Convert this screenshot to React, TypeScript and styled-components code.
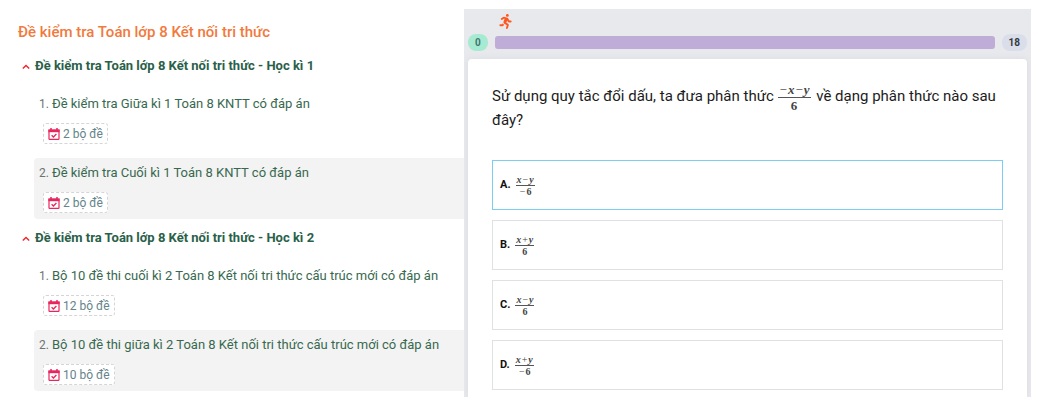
import React from "react";
import styled, { createGlobalStyle } from "styled-components";
import { FaRunning } from "react-icons/fa";

const GlobalStyle = createGlobalStyle`
  * { box-sizing: border-box; }
  body {
    margin: 0;
    background: #fff;
    font-family: Roboto, "Liberation Sans", sans-serif;
    color: #1c1c1c;
  }
`;

const Page = styled.div`
  display: grid;
  grid-template-columns: minmax(0, 464fr) minmax(0, 567fr);
  padding: 9px 8px 10px 0;
`;

const Sidebar = styled.aside`
  padding: 13px 0 6px 18px;
`;

const Title = styled.h1`
  margin: 0 0 14px;
  font-size: 15px;
  line-height: 20px;
  font-weight: 500;
  color: #f17a3c;
`;

const Group = styled.section`
  & + & { margin-top: 9px; }
`;

const GroupToggle = styled.button`
  display: flex;
  align-items: center;
  gap: 5px;
  width: 100%;
  margin: 0 0 13px;
  padding: 0 0 0 4px;
  border: 0;
  background: none;
  font: 700 13px/20px Roboto, "Liberation Sans", sans-serif;
  color: #2a6049;
  text-align: left;
  cursor: pointer;
`;

const ExamList = styled.ol`
  display: flex;
  flex-direction: column;
  gap: 8px;
  margin: 0;
  padding: 0 0 0 16px;
  list-style: none;
`;

const Exam = styled.li<{ $shaded: boolean }>`
  display: flex;
  flex-direction: column;
  align-items: flex-start;
  gap: 9px;
  padding: 5px 5px 6px;
  border-radius: 4px 0 0 4px;
  background: ${(p) => (p.$shaded ? "#f3f3f3" : "transparent")};
`;

const ExamLine = styled.div`
  display: flex;
  align-items: baseline;
  gap: 3px;
  height: 20px;
  line-height: 20px;
  white-space: nowrap;
`;

const Order = styled.span`
  font-size: 12px;
  color: #6d7470;
`;

const ExamLink = styled.a`
  font-size: 13px;
  color: #38694f;
  text-decoration: none;
`;

const CountBadge = styled.span`
  display: flex;
  align-items: center;
  gap: 3px;
  height: 21px;
  margin-left: 4px;
  padding: 0 4px;
  border: 1px dashed #d3d5d6;
  border-radius: 3px;
  background: #fff;
  font-size: 12px;
  color: #64838a;
`;

const Quiz = styled.main`
  display: flex;
  flex-direction: column;
  padding: 5px 4px 0;
  background: #e8e9ed;
`;

const Runner = styled.div`
  height: 18px;
  padding-left: 30px;
  color: #ff5722;

  svg { display: block; }
`;

const ProgressRow = styled.div`
  display: flex;
  align-items: center;
  gap: 7px;
  height: 20px;
  margin-bottom: 7px;
`;

const Pill = styled.span<{ $active?: boolean }>`
  padding: 0 7px;
  border-radius: 8px;
  background: ${(p) => (p.$active ? "#a7ead2" : "#d9deea")};
  color: ${(p) => (p.$active ? "#41776f" : "#353a42")};
  font-size: 10px;
  line-height: 17px;
  font-weight: 700;
`;

const Track = styled.div`
  flex: 1;
  height: 13px;
  border-radius: 3px;
  background: #bfadd7;
`;

const Card = styled.section`
  flex: 1;
  padding: 25px 24px 7px;
  border-radius: 4px 4px 0 0;
  background: #fff;
  box-shadow: 0 0 6px #d9dade;
  clip-path: inset(-6px -4px 0);
`;

const Question = styled.p`
  margin: 0 0 28px;
  font-size: 15px;
  line-height: 24px;
`;

const Options = styled.div`
  display: flex;
  flex-direction: column;
  gap: 10px;
`;

const Option = styled.button<{ $selected: boolean }>`
  display: flex;
  align-items: center;
  gap: 5px;
  height: 50px;
  padding: 0 7px;
  border: 1px solid ${(p) => (p.$selected ? "#7bcdf3" : "#e0e1e3")};
  background: #fff;
  font: 700 11px/16px Roboto, "Liberation Sans", sans-serif;
  color: #111;
  cursor: pointer;
`;

const FractionBox = styled.span<{ $large?: boolean }>`
  display: inline-flex;
  flex-direction: column;
  vertical-align: middle;
  margin: ${(p) => (p.$large ? "-8px 2px -8px 0" : "0")};
  font-family: "Liberation Serif", serif;
  font-size: ${(p) => (p.$large ? "13px" : "10px")};
  line-height: ${(p) => (p.$large ? "15px" : "11px")};
  font-weight: 700;
  text-align: center;
  color: #444;
`;

const Numerator = styled.span`
  padding: 0 1px;
  border-bottom: 1px solid #555;
`;

const Operator = styled.span`
  padding: 0 1px;
  font-weight: 400;
`;

const Fraction = ({ top, bottom, large }: { top: string; bottom: string; large?: boolean }) => {
  const typeset = (text: string) =>
    text.split("").map((ch, i) => {
      if (/[a-z]/.test(ch)) return <i key={i}>{ch}</i>;
      if (/[−+]/.test(ch)) return <Operator key={i}>{ch}</Operator>;
      return ch;
    });
  return (
    <FractionBox $large={large}>
      <Numerator>{typeset(top)}</Numerator>
      <span>{typeset(bottom)}</span>
    </FractionBox>
  );
};

const CalendarCheck = () => (
  <svg width="12" height="12" viewBox="0 0 12 12" fill="none" stroke="#e8265e" aria-hidden="true">
    <path d="M1 2.2h10v8.6a.6.6 0 0 1-.6.6H1.6a.6.6 0 0 1-.6-.6z" strokeWidth="1.2" />
    <path d="M.4 1.6h11.2v2.6H.4z" fill="#e8265e" stroke="none" />
    <path d="M3 0v2M9 0v2" strokeWidth="1.5" />
    <path d="M3.6 7.3l1.8 1.7 3-3" strokeWidth="1.3" />
  </svg>
);

const groups = [
  {
    title: "Đề kiểm tra Toán lớp 8 Kết nối tri thức - Học kì 1",
    exams: [
      { name: "Đề kiểm tra Giữa kì 1 Toán 8 KNTT có đáp án", count: 2 },
      { name: "Đề kiểm tra Cuối kì 1 Toán 8 KNTT có đáp án", count: 2 },
    ],
  },
  {
    title: "Đề kiểm tra Toán lớp 8 Kết nối tri thức - Học kì 2",
    exams: [
      { name: "Bộ 10 đề thi cuối kì 2 Toán 8 Kết nối tri thức cấu trúc mới có đáp án", count: 12 },
      { name: "Bộ 10 đề thi giữa kì 2 Toán 8 Kết nối tri thức cấu trúc mới có đáp án", count: 10 },
    ],
  },
];

const options = [
  { label: "A.", top: "x−y", bottom: "−6" },
  { label: "B.", top: "x+y", bottom: "6" },
  { label: "C.", top: "x−y", bottom: "6" },
  { label: "D.", top: "x+y", bottom: "−6" },
];

export default function App() {
  const [selected, setSelected] = React.useState("A.");
  return (
    <>
      <GlobalStyle />
      <Page>
        <Sidebar>
          <Title>Đề kiểm tra Toán lớp 8 Kết nối tri thức</Title>
          {groups.map((group) => (
            <Group key={group.title}>
              <GroupToggle type="button" aria-expanded="true">
                <svg width="8" height="8" viewBox="0 0 8 8" fill="none" stroke="#f0272d" strokeWidth="1.4" aria-hidden="true">
                  <path d="M0.8 6.6 L4 3.4 L7.2 6.6" />
                </svg>
                {group.title}
              </GroupToggle>
              <ExamList>
                {group.exams.map((exam, i) => (
                  <Exam key={exam.name} $shaded={i % 2 === 1}>
                    <ExamLine>
                      <Order>{i + 1}.</Order>
                      <ExamLink href="#">{exam.name}</ExamLink>
                    </ExamLine>
                    <CountBadge>
                      <CalendarCheck />
                      {exam.count} bộ đề
                    </CountBadge>
                  </Exam>
                ))}
              </ExamList>
            </Group>
          ))}
        </Sidebar>
        <Quiz>
          <Runner>
            <FaRunning size={15} />
          </Runner>
          <ProgressRow>
            <Pill $active>0</Pill>
            <Track role="progressbar" aria-label="Tiến độ" aria-valuenow={0} aria-valuemin={0} aria-valuemax={18} />
            <Pill>18</Pill>
          </ProgressRow>
          <Card>
            <Question>
              Sử dụng quy tắc đổi dấu, ta đưa phân thức <Fraction large top="−x−y" bottom="6" /> về dạng phân thức nào sau đây?
            </Question>
            <Options>
              {options.map((o) => (
                <Option
                  key={o.label}
                  type="button"
                  aria-pressed={selected === o.label}
                  $selected={selected === o.label}
                  onClick={() => setSelected(o.label)}
                >
                  {o.label}
                  <Fraction top={o.top} bottom={o.bottom} />
                </Option>
              ))}
            </Options>
          </Card>
        </Quiz>
      </Page>
    </>
  );
}
